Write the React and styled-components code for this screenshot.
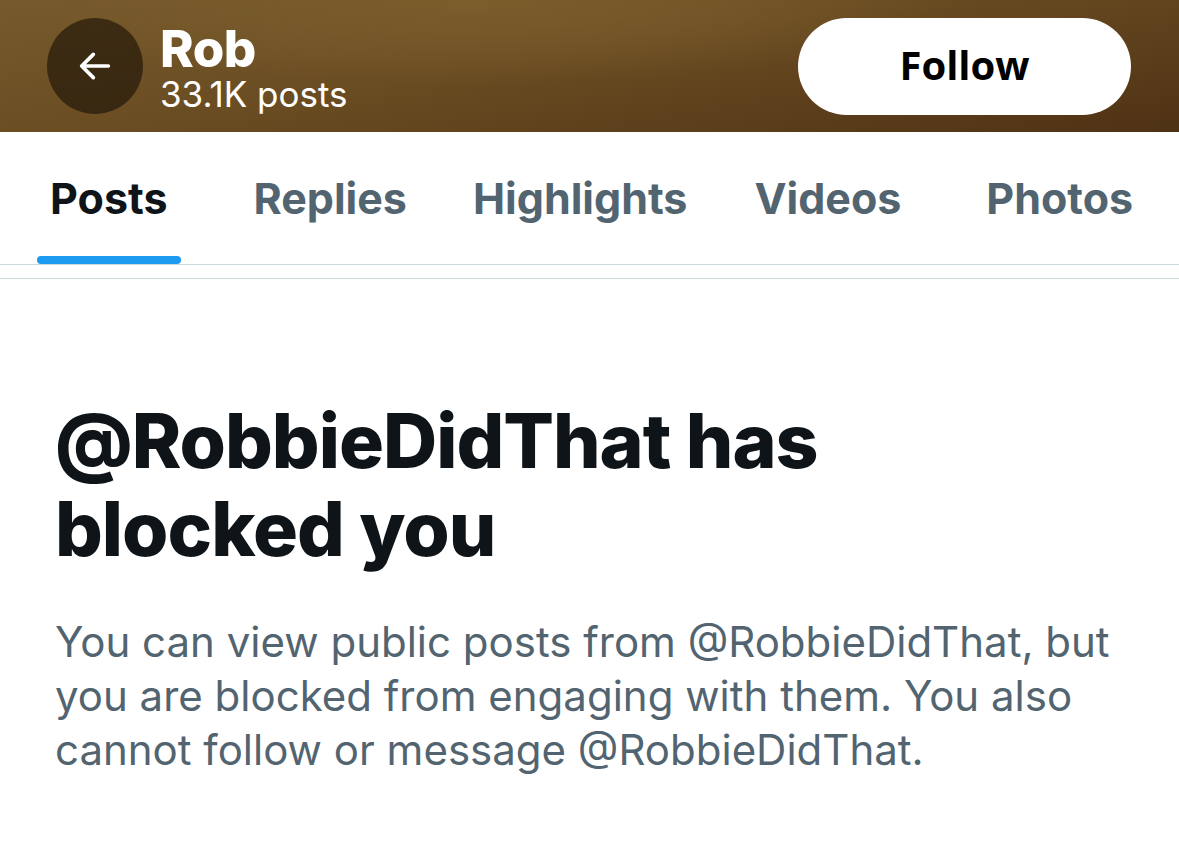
import React from "react";
import styled, { createGlobalStyle } from "styled-components";

const GlobalStyle = createGlobalStyle`
  html, body {
    margin: 0;
    padding: 0;
    background: #ffffff;
  }
  body {
    font-family: Inter, "Liberation Sans", sans-serif;
    -webkit-font-smoothing: antialiased;
  }
`;

const Page = styled.div`
  width: 1179px;
  min-height: 842px;
  background: #ffffff;
  overflow: hidden;
`;

const Header = styled.header`
  height: 132px;
  box-sizing: border-box;
  padding: 0 48px 0 47px;
  display: flex;
  align-items: center;
  justify-content: space-between;
  background:
    radial-gradient(ellipse 700px 120px at 40% 0%, rgba(125, 95, 45, 0.9), rgba(125, 95, 45, 0) 70%),
    linear-gradient(170deg, #765a2c 0%, #6a4c22 45%, #4e3214 100%);
`;

const HeaderLeft = styled.div`
  display: flex;
  align-items: center;
  gap: 17px;
`;

const BackButton = styled.button`
  width: 96px;
  height: 96px;
  border-radius: 50%;
  border: none;
  padding: 0;
  background: rgba(30, 20, 8, 0.65);
  display: flex;
  align-items: center;
  justify-content: center;
  color: #ffffff;
`;

const Title = styled.div`
  display: flex;
  flex-direction: column;
  color: #ffffff;
  padding-top: 4px;
`;

const Name = styled.div`
  font-size: 51px;
  font-weight: 800;
  line-height: 52px;
  letter-spacing: -0.5px;
`;

const Count = styled.div`
  font-size: 35px;
  font-weight: 400;
  line-height: 38px;
`;

const FollowButton = styled.button`
  width: 333px;
  height: 97px;
  border-radius: 49px;
  border: none;
  padding: 0 0 4px;
  background: #ffffff;
  color: #000000;
  font-family: "Open Sans", "Liberation Sans", sans-serif;
  font-size: 40px;
  font-weight: 700;
`;

const Tabs = styled.nav`
  display: flex;
  height: 133px;
  box-sizing: border-box;
  border-bottom: 1px solid #cfd9de;
  padding: 0 0 0 50px;
`;

const Tab = styled.div`
  flex: none;
  margin-left: ${(p) => p.$offset}px;
  display: flex;
  flex-direction: column;
  align-items: center;
`;

const TabLabel = styled.div`
  position: relative;
  height: 100%;
  display: flex;
  align-items: center;
  padding-bottom: 1px;
  box-sizing: border-box;
  font-size: 43px;
  font-weight: 700;
  color: ${(p) => (p.$active ? "#0f1419" : "#536471")};
  &::after {
    content: "";
    display: ${(p) => (p.$active ? "block" : "none")};
    position: absolute;
    left: -13px;
    right: -14px;
    bottom: 0;
    height: 8px;
    border-radius: 4px;
    background: #1d9bf0;
  }
`;

const Divider = styled.div`
  height: 13px;
  border-bottom: 1px solid #cfd9de;
`;

const Content = styled.section`
  padding: 118px 55px 0;
`;

const Heading = styled.h1`
  margin: 0;
  font-size: 75px;
  font-weight: 800;
  line-height: 88px;
  letter-spacing: -1px;
  color: #0f1419;
  max-width: 900px;
`;

const Body = styled.p`
  margin: 42px 0 0;
  font-size: 42px;
  line-height: 54px;
  color: #536471;
  max-width: 1080px;
`;

const tabs = [
  { label: "Posts", offset: 0 },
  { label: "Replies", offset: 86 },
  { label: "Highlights", offset: 66 },
  { label: "Videos", offset: 67 },
  { label: "Photos", offset: 85 },
];

const ArrowLeft = () => (
  <svg width="40" height="40" viewBox="0 0 24 24" fill="none">
    <path
      d="M20 12H5M11 5l-7 7 7 7"
      stroke="#ffffff"
      strokeWidth="2.2"
      strokeLinecap="round"
      strokeLinejoin="round"
    />
  </svg>
);

const App = () => (
  <>
    <GlobalStyle />
    <Page>
      <Header>
        <HeaderLeft>
          <BackButton>
            <ArrowLeft />
          </BackButton>
          <Title>
            <Name>Rob</Name>
            <Count>33.1K posts</Count>
          </Title>
        </HeaderLeft>
        <FollowButton>Follow</FollowButton>
      </Header>
      <Tabs>
        {tabs.map((t, i) => (
          <Tab key={t.label} $offset={t.offset}>
            <TabLabel $active={i === 0}>{t.label}</TabLabel>
          </Tab>
        ))}
      </Tabs>
      <Divider />
      <Content>
        <Heading>@RobbieDidThat has blocked you</Heading>
        <Body>
          You can view public posts from @RobbieDidThat, but you are blocked
          from engaging with them. You also cannot follow or message
          @RobbieDidThat.
        </Body>
      </Content>
    </Page>
  </>
);

export default App;
